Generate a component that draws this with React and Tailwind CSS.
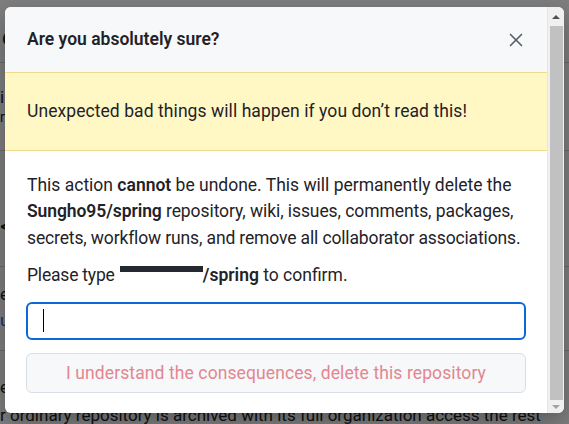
import { X } from "lucide-react";

const font = { fontFamily: 'Roboto, "Liberation Sans", sans-serif' };

const App = () => {
  return (
    <div className="relative w-[569px] h-[424px] overflow-hidden bg-white" style={font}>
      {/* page behind the dialog */}
      <div className="text-[#1f2328] text-[17px]">
        <div className="h-[63px] border-b border-[#d0d7de] pt-[18px] pl-[2px] text-[26px] font-semibold">e</div>
        <div className="h-[88px] border-b border-[#d0d7de] pt-[24px] leading-[20px]">
          <div>i</div>
          <div className="text-[14px]">ne</div>
        </div>
        <div className="h-[116px] border-b border-[#d0d7de] pt-[56px] text-[26px]">&lt;</div>
        <div className="h-[84px] border-b border-[#d0d7de] pt-[14px] leading-[26px]">
          <div>e</div>
          <div className="text-[#0969da]">u</div>
        </div>
        <div className="pt-[22px] leading-[28px]">
          <div>el</div>
          <div className="whitespace-nowrap">r ordinary repository is archived with its full organization access the rest</div>
        </div>
      </div>

      {/* overlay */}
      <div className="absolute inset-0 bg-black/50" />

      {/* dialog */}
      <div className="absolute left-[5px] top-[7px] w-[559px] h-[406px] bg-white rounded-[6px] overflow-hidden flex shadow-[0_8px_24px_rgba(0,0,0,0.3)]">
        <div className="flex-1 flex flex-col text-[#1f2328] text-[17.5px]">
          <div className="h-[65px] shrink-0 bg-[#f6f8fa] flex items-center justify-between pl-[22px] pr-[20px]">
            <h1 className="font-semibold whitespace-nowrap">Are you absolutely sure?</h1>
            <X size={22} strokeWidth={1.8} className="text-[#57606a]" />
          </div>
          <div className="h-[79px] shrink-0 bg-[#fff8c5] border-y border-[#f0d98a] flex items-center pl-[22px] pb-px tracking-[0.07px] whitespace-nowrap">
            Unexpected bad things will happen if you don’t read this!
          </div>
          <div className="pl-[22px] pr-[21px] pt-[21px]">
            <div className="leading-[26.4px] whitespace-nowrap">
              <div>
                This action <b className="font-semibold">cannot</b> be undone. This will permanently delete the
              </div>
              <div className="tracking-[-0.08px]">
                <b className="font-semibold">Sungho95/spring</b> repository, wiki, issues, comments, packages,
              </div>
              <div className="tracking-[-0.14px]">secrets, workflow runs, and remove all collaborator associations.</div>
            </div>
            <div className="mt-[11px] leading-[26.4px] flex items-start whitespace-nowrap">
              <span className="tracking-[-0.2px]">Please type&nbsp;</span>
              <span className="w-[83px] h-[6px] bg-[#24292f] mt-[4px] ml-px" />
              <b className="font-semibold">/spring</b>
              <span>&nbsp;to confirm.</span>
            </div>
            <div className="mt-[13px] -ml-px w-[500px] h-[38px] border-2 border-[#0969da] rounded-[6px] flex items-center pl-[15px]">
              <span className="w-px h-[23px] bg-black" />
            </div>
            <button className="mt-[13px] -ml-px w-[500px] h-[40px] bg-[#f6f8fa] border border-[#d8dee4] rounded-[6px] text-[#e3868f] tracking-[0.1px] whitespace-nowrap">
              I understand the consequences, delete this repository
            </button>
          </div>
        </div>
        {/* scrollbar */}
        <div className="w-[17px] shrink-0 bg-[#f0f0f0] border-l border-[#e6e6e6] flex flex-col items-center">
          <div className="h-[19px] flex items-center justify-center">
            <div className="w-0 h-0 border-x-[4px] border-x-transparent border-b-[4px] border-b-[#505050]" />
          </div>
          <div className="w-[13px] flex-1 bg-[#c1c1c1]" />
          <div className="h-[13px] flex items-center justify-center">
            <div className="w-0 h-0 border-x-[4px] border-x-transparent border-t-[4px] border-t-[#a3a3a3]" />
          </div>
        </div>
      </div>
    </div>
  );
};

export default App;
